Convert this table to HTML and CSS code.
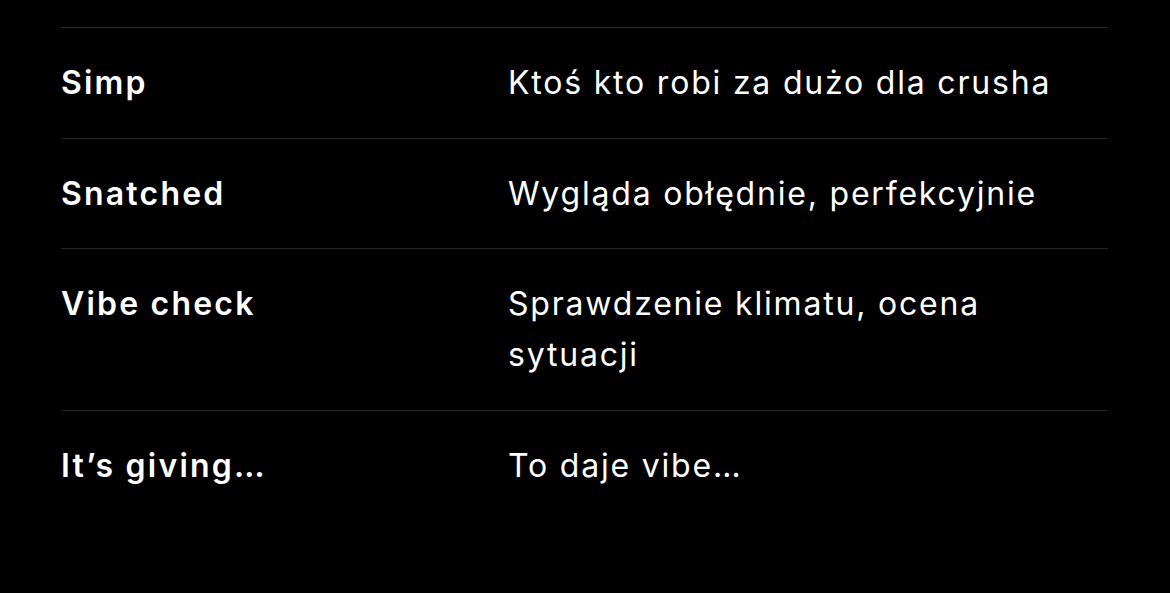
FILE: index.html
```html
<!DOCTYPE html>
<html lang="pl">
    <head>
        <meta charset="utf-8" />
        <title>Slang</title>
        <link rel="stylesheet" href="styles.css">
    </head>
    <body>
        <div class="table">
            <div class="row">
                <div class="term">Simp</div>
                <div class="desc">Ktoś kto robi za dużo dla crusha</div>
            </div>
            <div class="row">
                <div class="term">Snatched</div>
                <div class="desc">Wygląda obłędnie, perfekcyjnie</div>
            </div>
            <div class="row">
                <div class="term">Vibe check</div>
                <div class="desc">Sprawdzenie klimatu, ocena sytuacji</div>
            </div>
            <div class="row">
                <div class="term">It’s giving…</div>
                <div class="desc">To daje vibe…</div>
            </div>
        </div>
    </body>
</html>
```

FILE: styles.css
```css
html, body {
    margin: 0;
    background: #000000;
}
body {
    color: #ffffff;
    font-family: Inter, "Noto Sans", sans-serif;
    font-size: 32px;
    line-height: 51px;
}
.table {
    padding: 27px 62px 0 61px;
}
.row {
    display: grid;
    grid-template-columns: 447px 1fr;
    padding: 29px 0 29.5px;
    border-top: 1px solid #262626;
}
.term {
    font-weight: 600;
    letter-spacing: 2.2px;
}
.desc {
    font-weight: 400;
    letter-spacing: 1.8px;
    max-width: 565px;
}
```
